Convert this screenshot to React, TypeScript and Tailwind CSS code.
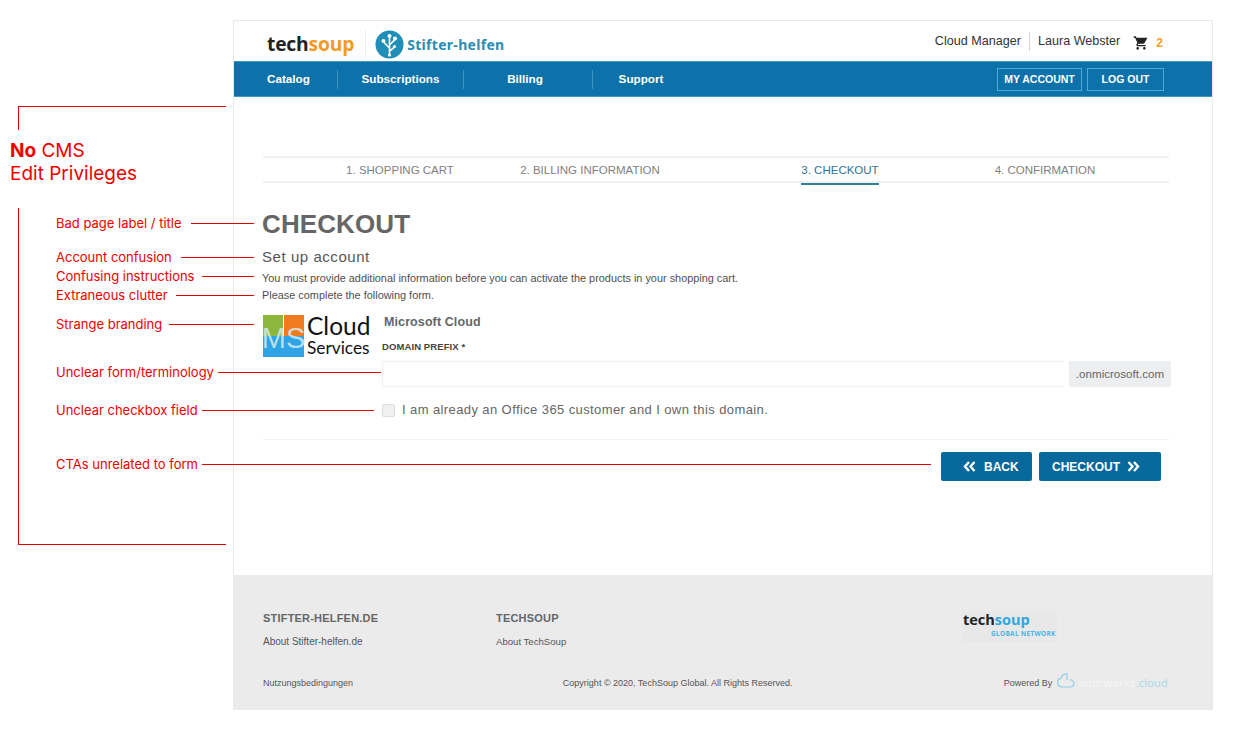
import React from "react";

const arial = "font-['Liberation_Sans',Arial,sans-serif]";

function Note({ y, x2, text, textW }: { y: number; x2: number; text: string; textW: number }) {
  return (
    <div className="absolute left-[56px] flex items-center h-[16px]" style={{ top: y - 8 }}>
      <span className="text-[13px] leading-[16px] whitespace-nowrap text-[#f00000]" style={{ width: textW }}>{text}</span>
      <span className="h-px bg-[#e60000]" style={{ width: x2 - 56 - textW }} />
    </div>
  );
}

function Chevrons({ right }: { right?: boolean }) {
  return (
    <svg width="13" height="11" viewBox="0 0 13 11" className={right ? "" : "rotate-180"} fill="none" stroke="currentColor" strokeWidth="2.4">
      <path d="M1.5 1l4 4.5-4 4.5M7 1l4 4.5-4 4.5" />
    </svg>
  );
}

function Step({ label, w, active }: { label: string; w: string; active?: boolean }) {
  return (
    <div className={`${w} flex justify-center`}>
      <span className={`h-[27px] leading-[25px] text-[11.5px] ${active ? "text-[#34708f] border-b-2 border-[#2f7d9f]" : "text-[#808080]"}`}>{label}</span>
    </div>
  );
}

export default function App() {
  return (
    <div className="relative w-[1233px] h-[730px] bg-white overflow-hidden font-['Inter',sans-serif]">
      <div className="pt-[20px] pl-[233px]">
        <div className={`w-[980px] h-[690px] border-t border-r border-l border-[#e9e9e9] flex flex-col ${arial}`}>
          {/* top bar */}
          <header className="h-[40px] flex items-center pl-[33px] pr-[49px]">
            <div className="flex items-center mt-[6px]">
              <span className="font-['Open_Sans',sans-serif] font-bold text-[19.3px] tracking-[-0.2px] leading-none text-[#222]">
                tech<span className="text-[#f59a23]">soup</span>
              </span>
              <span className="ml-[11px] w-px h-[28px] bg-[#eeeeee]" />
              <svg width="29" height="29" viewBox="0 0 29 29" className="ml-[9px]">
                <circle cx="14.5" cy="14.5" r="14" fill="#1f8fb8" />
                <g stroke="#fff" strokeWidth="1.6" fill="none" strokeLinecap="round">
                  <path d="M14.5 24V8M14.5 18l-5-5M14.5 15l5-5M14.5 21l4-3" />
                </g>
                <g fill="#fff">
                  <circle cx="14.5" cy="6" r="2" /><circle cx="8.5" cy="11" r="2" /><circle cx="20" cy="8.5" r="2" /><circle cx="19.5" cy="16.5" r="1.6" /><circle cx="14.5" cy="25" r="1.6" />
                </g>
              </svg>
              <span className="ml-[3px] font-['Noto_Sans',sans-serif] font-bold text-[14px] tracking-[0.3px] text-[#2b8db2]">Stifter-helfen</span>
            </div>
            <div className="ml-auto flex items-center text-[12.6px] text-[#333]">
              <span>Cloud Manager</span>
              <span className="mx-[8px] w-px h-[19px] bg-[#d5d5d5]" />
              <span>Laura Webster</span>
              <svg width="16" height="16" viewBox="0 0 24 24" fill="#222" className="ml-[13px] mt-[3px]">
                <path d="M7 18a2 2 0 1 0 0 4 2 2 0 0 0 0-4zM1 2v2h2l3.6 7.6-1.35 2.4C4.52 15.37 5.48 17 7 17h12v-2H7l1.1-2h7.45c.75 0 1.41-.41 1.75-1.03L21.7 4H5.2l-.94-2H1zm16 16a2 2 0 1 0 0 4 2 2 0 0 0 0-4z" />
              </svg>
              <span className="ml-[7px] mt-[3px] text-[12px] font-bold text-[#f5a02a]">2</span>
            </div>
          </header>
          {/* nav */}
          <nav className="h-[36px] bg-[#0d72a9] border-y border-[#3f97c4] flex items-center pr-[48px] text-white text-[11.7px] font-bold">
            <span className="w-[103px] pl-[33px]">Catalog</span>
            <span className="w-px h-[19px] bg-[#3a93c3]" />
            <span className="w-[125px] text-center">Subscriptions</span>
            <span className="w-px h-[19px] bg-[#3a93c3]" />
            <span className="w-[128px] pr-[6px] text-center">Billing</span>
            <span className="w-px h-[19px] bg-[#3a93c3]" />
            <span className="w-[96px] text-center">Support</span>
            <div className="ml-auto flex gap-[5px] text-[10.5px] mt-[1px]">
              <span className="w-[85px] h-[23px] border border-[#4fa9d8] flex items-center justify-center">MY ACCOUNT</span>
              <span className="w-[77px] h-[23px] border border-[#4fa9d8] flex items-center justify-center">LOG OUT</span>
            </div>
          </nav>
          {/* main */}
          <main className="flex-1 pl-[29px] pr-[41px] pt-[60px]">
            <div className="w-[906px] h-[27px] border-y-2 border-[#f1f1f1] flex items-start -mb-[1px] -mt-[1px]">
              <div className="w-[66px]" />
              <Step label="1. SHOPPING CART" w="w-[142px]" />
              <Step label="2. BILLING INFORMATION" w="w-[238px]" />
              <div className="w-[71px]" />
              <Step label="3. CHECKOUT" w="w-[120px]" active />
              <div className="w-[72px]" />
              <Step label="4. CONFIRMATION" w="w-[146px]" />
            </div>
            <h1 className="mt-[27px] -ml-px text-[26px] leading-[30px] font-bold text-[#666] tracking-[0.1px]">CHECKOUT</h1>
            <h2 className="mt-[9px] -ml-px text-[15px] leading-[18px] text-[#555] tracking-[0.55px]">Set up account</h2>
            <p className="mt-[4px] -ml-px text-[10.9px] leading-[17px] text-[#4f4f4f]">
              You must provide additional information before you can activate the products in your shopping cart.
              <br />
              Please complete the following form.
            </p>
            <div className="mt-[11px] flex">
              <div className="w-[120px] h-[42px] flex shrink-0">
                <div className="relative w-[41px] h-[42px] shrink-0 grid grid-cols-2 grid-rows-2 gap-x-[1px] overflow-hidden">
                  <div className="bg-[#8cb63c]" />
                  <div className="bg-[#f07a1f]" />
                  <div className="col-span-2 bg-[#2ea3e6]" />
                  <span className={`absolute left-0 right-0 top-[11px] h-[24px] flex items-center justify-center text-[29px] leading-none text-[#d8eef2] opacity-80 ${arial}`}>MS</span>
                </div>
                <div className="ml-[3px] font-['Lato',sans-serif] text-[#111] leading-none">
                  <div className="h-[22px] text-[24.5px] leading-[22px]">Cloud</div>
                  <div className="h-[20px] text-[17.3px] leading-[20px] mt-[1px]">Services</div>
                </div>
              </div>
              <div className="flex-1 min-w-0">
                <div className="-mt-[1px] text-[12.5px] leading-[16px] font-bold text-[#666] tracking-[0.1px] pl-[1px]">Microsoft Cloud</div>
                <div className="mt-[11px] text-[9.5px] leading-[12px] font-bold text-[#444] tracking-[0.1px] -ml-px">DOMAIN PREFIX *</div>
                <div className="mt-[8px] h-[26px] flex -ml-px w-[789px]">
                  <div className="flex-1 border border-[#f1f1f1] rounded-l-[2px] border-r-0" />
                  <div className="w-[102px] ml-[5px] bg-[#edeef0] rounded-r-[2px] flex items-center justify-center text-[11.6px] text-[#666]">.onmicrosoft.com</div>
                </div>
                <label className="mt-[14px] flex items-center -ml-px">
                  <span className="w-[13px] h-[13px] rounded-[2px] border border-[#dddddd] bg-[#f0f0f0]" />
                  <span className="ml-[7px] text-[13px] leading-[18px] text-[#666] tracking-[0.4px]">I am already an Office 365 customer and I own this domain.</span>
                </label>
              </div>
            </div>
            <div className="mt-[20px] w-[906px] h-px bg-[#f2f2f2]" />
            <div className="mt-[12px] w-[898px] flex justify-end gap-[7px] text-white text-[12px] font-bold">
              <button className="w-[91px] h-[29px] bg-[#07689c] rounded-[2px] flex items-center pl-[22px] gap-[8px]">
                <Chevrons /> BACK
              </button>
              <button className="w-[122px] h-[29px] bg-[#07689c] rounded-[2px] flex items-center pl-[13px] gap-[7px]">
                CHECKOUT <Chevrons right />
              </button>
            </div>
          </main>
          {/* footer */}
          <footer className="h-[135px] bg-[#ebebeb] pl-[29px] pr-[44px] pt-[36px] text-[#555]">
            <div className="flex h-[43px]">
              <div className="w-[233px]">
                <div className="text-[11px] leading-[14px] font-bold text-[#666] tracking-[0.2px]">STIFTER-HELFEN.DE</div>
                <div className="mt-[11px] text-[10px] leading-[12px]">About Stifter-helfen.de</div>
              </div>
              <div className="w-[467px]">
                <div className="text-[11px] leading-[14px] font-bold text-[#666] tracking-[0.2px]">TECHSOUP</div>
                <div className="mt-[11px] text-[9.6px] leading-[12px]">About TechSoup</div>
              </div>
              <div className="mt-[1px] w-[94px] h-[30px] bg-[#e8e8e8] font-['Open_Sans',sans-serif]">
                <div className="text-[14.5px] leading-[16px] font-bold text-[#222]">tech<span className="text-[#2ea6e0]">soup</span></div>
                <div className="pl-[28px] mt-[1px] text-[6.5px] leading-[10px] font-bold tracking-[0.3px] text-[#4cb5e6] whitespace-nowrap">GLOBAL NETWORK</div>
              </div>
            </div>
            <div className="mt-[21px] flex items-center text-[9px] leading-[12px]">
              <span className="w-[300px]">Nutzungsbedingungen</span>
              <span className="w-[441px]">Copyright © 2020, TechSoup Global. All Rights Reserved.</span>
              <span className="whitespace-nowrap">Powered By</span>
              <svg width="22" height="18" viewBox="0 0 22 18" fill="none" stroke="#8fcdea" strokeWidth="1.2" className="ml-[4px] -mt-[3px]">
                <path d="M15 15H6a4.5 4.5 0 0 1-.8-8.9A5 5 0 0 1 11 2v6M14 8a3.5 3.5 0 0 1 1 7" />
              </svg>
              <span className="text-[11px] tracking-[0.2px] text-[#f4f6f7] font-['Noto_Sans',sans-serif] whitespace-nowrap">interworks<span className="text-[#a9d9ee]">.cloud</span></span>
            </div>
          </footer>
        </div>
      </div>

      {/* annotation layer */}
      <div className="absolute left-[18px] top-[106px] w-[208px] h-px bg-[#e60000]" />
      <div className="absolute left-[18px] top-[106px] w-px h-[24px] bg-[#e60000]" />
      <div className="absolute left-[10px] top-[139px] text-[19px] leading-[23px] text-[#f00000]">
        <b className="font-bold">No</b> CMS
        <br />
        Edit Privileges
      </div>
      <div className="absolute left-[18px] top-[208px] w-px h-[337px] bg-[#e60000]" />
      <div className="absolute left-[18px] top-[544px] w-[208px] h-px bg-[#e60000]" />
      <Note y={223} x2={254} text="Bad page label / title" textW={135} />
      <Note y={257} x2={254} text="Account confusion" textW={125} />
      <Note y={276} x2={254} text="Confusing instructions" textW={146} />
      <Note y={295} x2={254} text="Extraneous clutter" textW={120} />
      <Note y={324} x2={254} text="Strange branding" textW={113} />
      <Note y={372} x2={381} text="Unclear form/terminology" textW={162} />
      <Note y={410} x2={374} text="Unclear checkbox field" textW={146} />
      <Note y={464} x2={931} text="CTAs unrelated to form" textW={146} />
    </div>
  );
}
